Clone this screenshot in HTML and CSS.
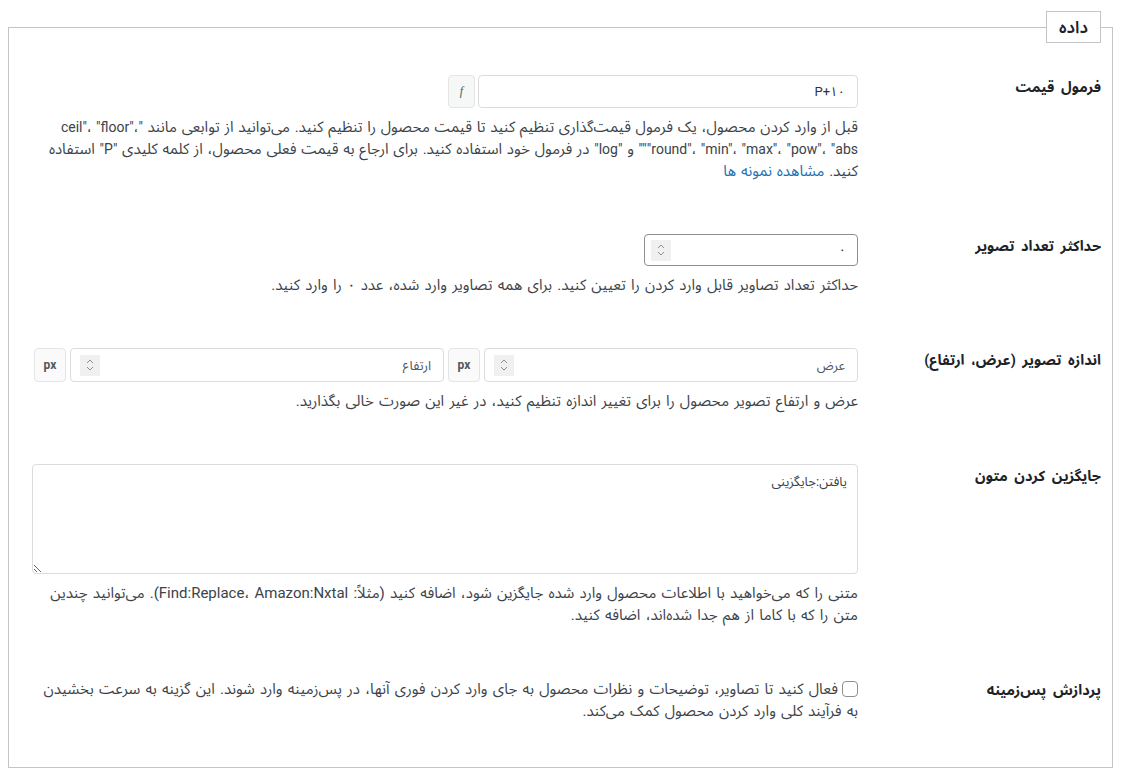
FILE: index.html
```html
<!DOCTYPE html>
<html lang="fa" dir="rtl">
<head>
<meta charset="utf-8">
<title>داده</title>
<link rel="stylesheet" href="styles.css">
</head>
<body>
<fieldset class="box">
  <legend class="legend">داده</legend>

  <div class="row">
    <div class="label">فرمول قیمت</div>
    <div class="field">
      <div class="group">
        <input class="input formula" type="text" value="P+۱۰">
        <span class="addon addon-f">f</span>
      </div>
      <p class="desc desc-tight">قبل از وارد کردن محصول، یک فرمول قیمت‌گذاری تنظیم کنید تا قیمت محصول را تنظیم کنید. می‌توانید از توابعی مانند <span class="lat">"ceil"، "floor"، "round"، "min"، "max"، "pow"، "abs""</span> و <span class="lat">"log"</span> در فرمول خود استفاده کنید. برای ارجاع به قیمت فعلی محصول، از کلمه کلیدی <span class="lat">"P"</span> استفاده کنید. <a class="link" href="#">مشاهده نمونه ها</a></p>
    </div>
  </div>

  <div class="row">
    <div class="label">حداکثر تعداد تصویر</div>
    <div class="field">
      <div class="numbox">
        <input class="bare" type="text" value="۰">
        <span class="spinner"><svg width="10" height="16" viewBox="0 0 10 16"><path d="M2 6 L5 3 L8 6 M2 10 L5 13 L8 10" fill="none" stroke="#8c8f94" stroke-width="1"/></svg></span>
      </div>
      <p class="desc">حداکثر تعداد تصاویر قابل وارد کردن را تعیین کنید. برای همه تصاویر وارد شده، عدد ۰ را وارد کنید.</p>
    </div>
  </div>

  <div class="row">
    <div class="label">اندازه تصویر (عرض، ارتفاع)</div>
    <div class="field">
      <div class="group group-size">
        <div class="sizebox">
          <input class="bare" type="text" placeholder="عرض">
          <span class="spinner"><svg width="10" height="16" viewBox="0 0 10 16"><path d="M2 6 L5 3 L8 6 M2 10 L5 13 L8 10" fill="none" stroke="#8c8f94" stroke-width="1"/></svg></span>
        </div>
        <span class="addon addon-px">px</span>
        <div class="sizebox">
          <input class="bare" type="text" placeholder="ارتفاع">
          <span class="spinner"><svg width="10" height="16" viewBox="0 0 10 16"><path d="M2 6 L5 3 L8 6 M2 10 L5 13 L8 10" fill="none" stroke="#8c8f94" stroke-width="1"/></svg></span>
        </div>
        <span class="addon addon-px">px</span>
      </div>
      <p class="desc">عرض و ارتفاع تصویر محصول را برای تغییر اندازه تنظیم کنید، در غیر این صورت خالی بگذارید.</p>
    </div>
  </div>

  <div class="row">
    <div class="label">جایگزین کردن متون</div>
    <div class="field">
      <textarea class="area">یافتن:جایگزینی</textarea>
      <p class="desc">متنی را که می‌خواهید با اطلاعات محصول وارد شده جایگزین شود، اضافه کنید (مثلاً: Find:Replace، Amazon:Nxtal). می‌توانید چندین متن را که با کاما از هم جدا شده‌اند، اضافه کنید.</p>
    </div>
  </div>

  <div class="row">
    <div class="label">پردازش پس‌زمینه</div>
    <div class="field">
      <label class="check"><input class="cb" type="checkbox">فعال کنید تا تصاویر، توضیحات و نظرات محصول به جای وارد کردن فوری آنها، در پس‌زمینه وارد شوند. این گزینه به سرعت بخشیدن به فرآیند کلی وارد کردن محصول کمک می‌کند.</label>
    </div>
  </div>
</fieldset>
</body>
</html>
```

FILE: styles.css
```css
html, body {
  margin: 0;
  padding: 0;
  background: #fff;
}

body {
  font-family: Roboto, "Noto Sans Arabic", "DejaVu Sans", sans-serif;
  font-size: 15px;
  color: #3c434a;
}

.box {
  margin: 11px 14px 10px 8px;
  border: 1px solid #c3c4c7;
  padding: 6px 11px 19px 23px;
  min-width: 0;
}

.legend {
  border: 1px solid #c3c4c7;
  padding: 0 12px;
  height: 32px;
  box-sizing: border-box;
  line-height: 30px;
  font-size: 17px;
  font-weight: 600;
  color: #1d2327;
}

.row {
  display: grid;
  grid-template-columns: 230px 1fr;
  column-gap: 13px;
  padding: 26px 0;
}

.label {
  font-size: 14.5px;
  font-weight: bold;
  word-spacing: 3px;
  color: #1d2327;
  line-height: 22px;
  padding-top: 2px;
}

.field {
  min-width: 0;
}

.desc {
  margin: 8px 0 0;
  line-height: 22px;
  word-spacing: 1.5px;
}

.desc-tight {
  word-spacing: 1px;
}

.lat {
  font-size: 14px;
}

.link {
  color: #2271b1;
  text-decoration: none;
}

.group {
  display: flex;
  gap: 3px;
}

.group-size {
  gap: 4px;
}

.input {
  height: 33px;
  box-sizing: border-box;
  border: 1px solid #dcdcde;
  border-radius: 4px;
  padding: 0 12px;
  font: inherit;
  font-size: 13px;
  color: #2c3338;
  background: #fff;
  outline: none;
}

.formula {
  width: 380px;
}

.addon {
  display: flex;
  align-items: center;
  justify-content: center;
  box-sizing: border-box;
  border: 1px solid #e5e5e5;
  border-radius: 4px;
  background: #f6f7f7;
  color: #50575e;
}

.addon-f {
  width: 27px;
  height: 33px;
  font-family: "Liberation Serif", serif;
  font-style: italic;
  font-size: 12px;
}

.addon-px {
  width: 32px;
  height: 34px;
  font-size: 12px;
  font-weight: bold;
  font-family: Roboto, sans-serif;
  background: #fafafa;
}

.numbox, .sizebox {
  display: flex;
  align-items: center;
  box-sizing: border-box;
  background: #fff;
}

.numbox {
  width: 214px;
  height: 32px;
  border: 1px solid #8c8f94;
  border-radius: 4px;
  padding: 0 11px 0 6px;
}

.sizebox {
  width: 374px;
  height: 34px;
  border: 1px solid #dcdcde;
  border-radius: 4px;
  padding: 0 12px 0 9px;
}

.bare {
  flex: 1;
  min-width: 0;
  border: 0;
  outline: none;
  padding: 0;
  background: transparent;
  font: inherit;
  font-size: 13px;
  color: #2c3338;
}

.bare::placeholder {
  color: #50575e;
  opacity: 1;
}

.spinner {
  width: 20px;
  height: 21px;
  background: #f0f0f1;
  display: flex;
  align-items: center;
  justify-content: center;
}

.area {
  display: block;
  width: 100%;
  height: 110px;
  box-sizing: border-box;
  border: 1px solid #dcdcde;
  border-radius: 4px;
  padding: 8px 10px;
  font: inherit;
  font-size: 13px;
  line-height: 18px;
  color: #3c434a;
  background: #fff;
  outline: none;
}

.check {
  display: block;
  line-height: 22px;
  word-spacing: 1.5px;
}

.cb {
  appearance: none;
  -webkit-appearance: none;
  width: 16px;
  height: 16px;
  box-sizing: border-box;
  border: 1px solid #8c8f94;
  border-radius: 4px;
  margin: 0 0 0 4px;
  vertical-align: -3px;
  background: #fff;
}
```
